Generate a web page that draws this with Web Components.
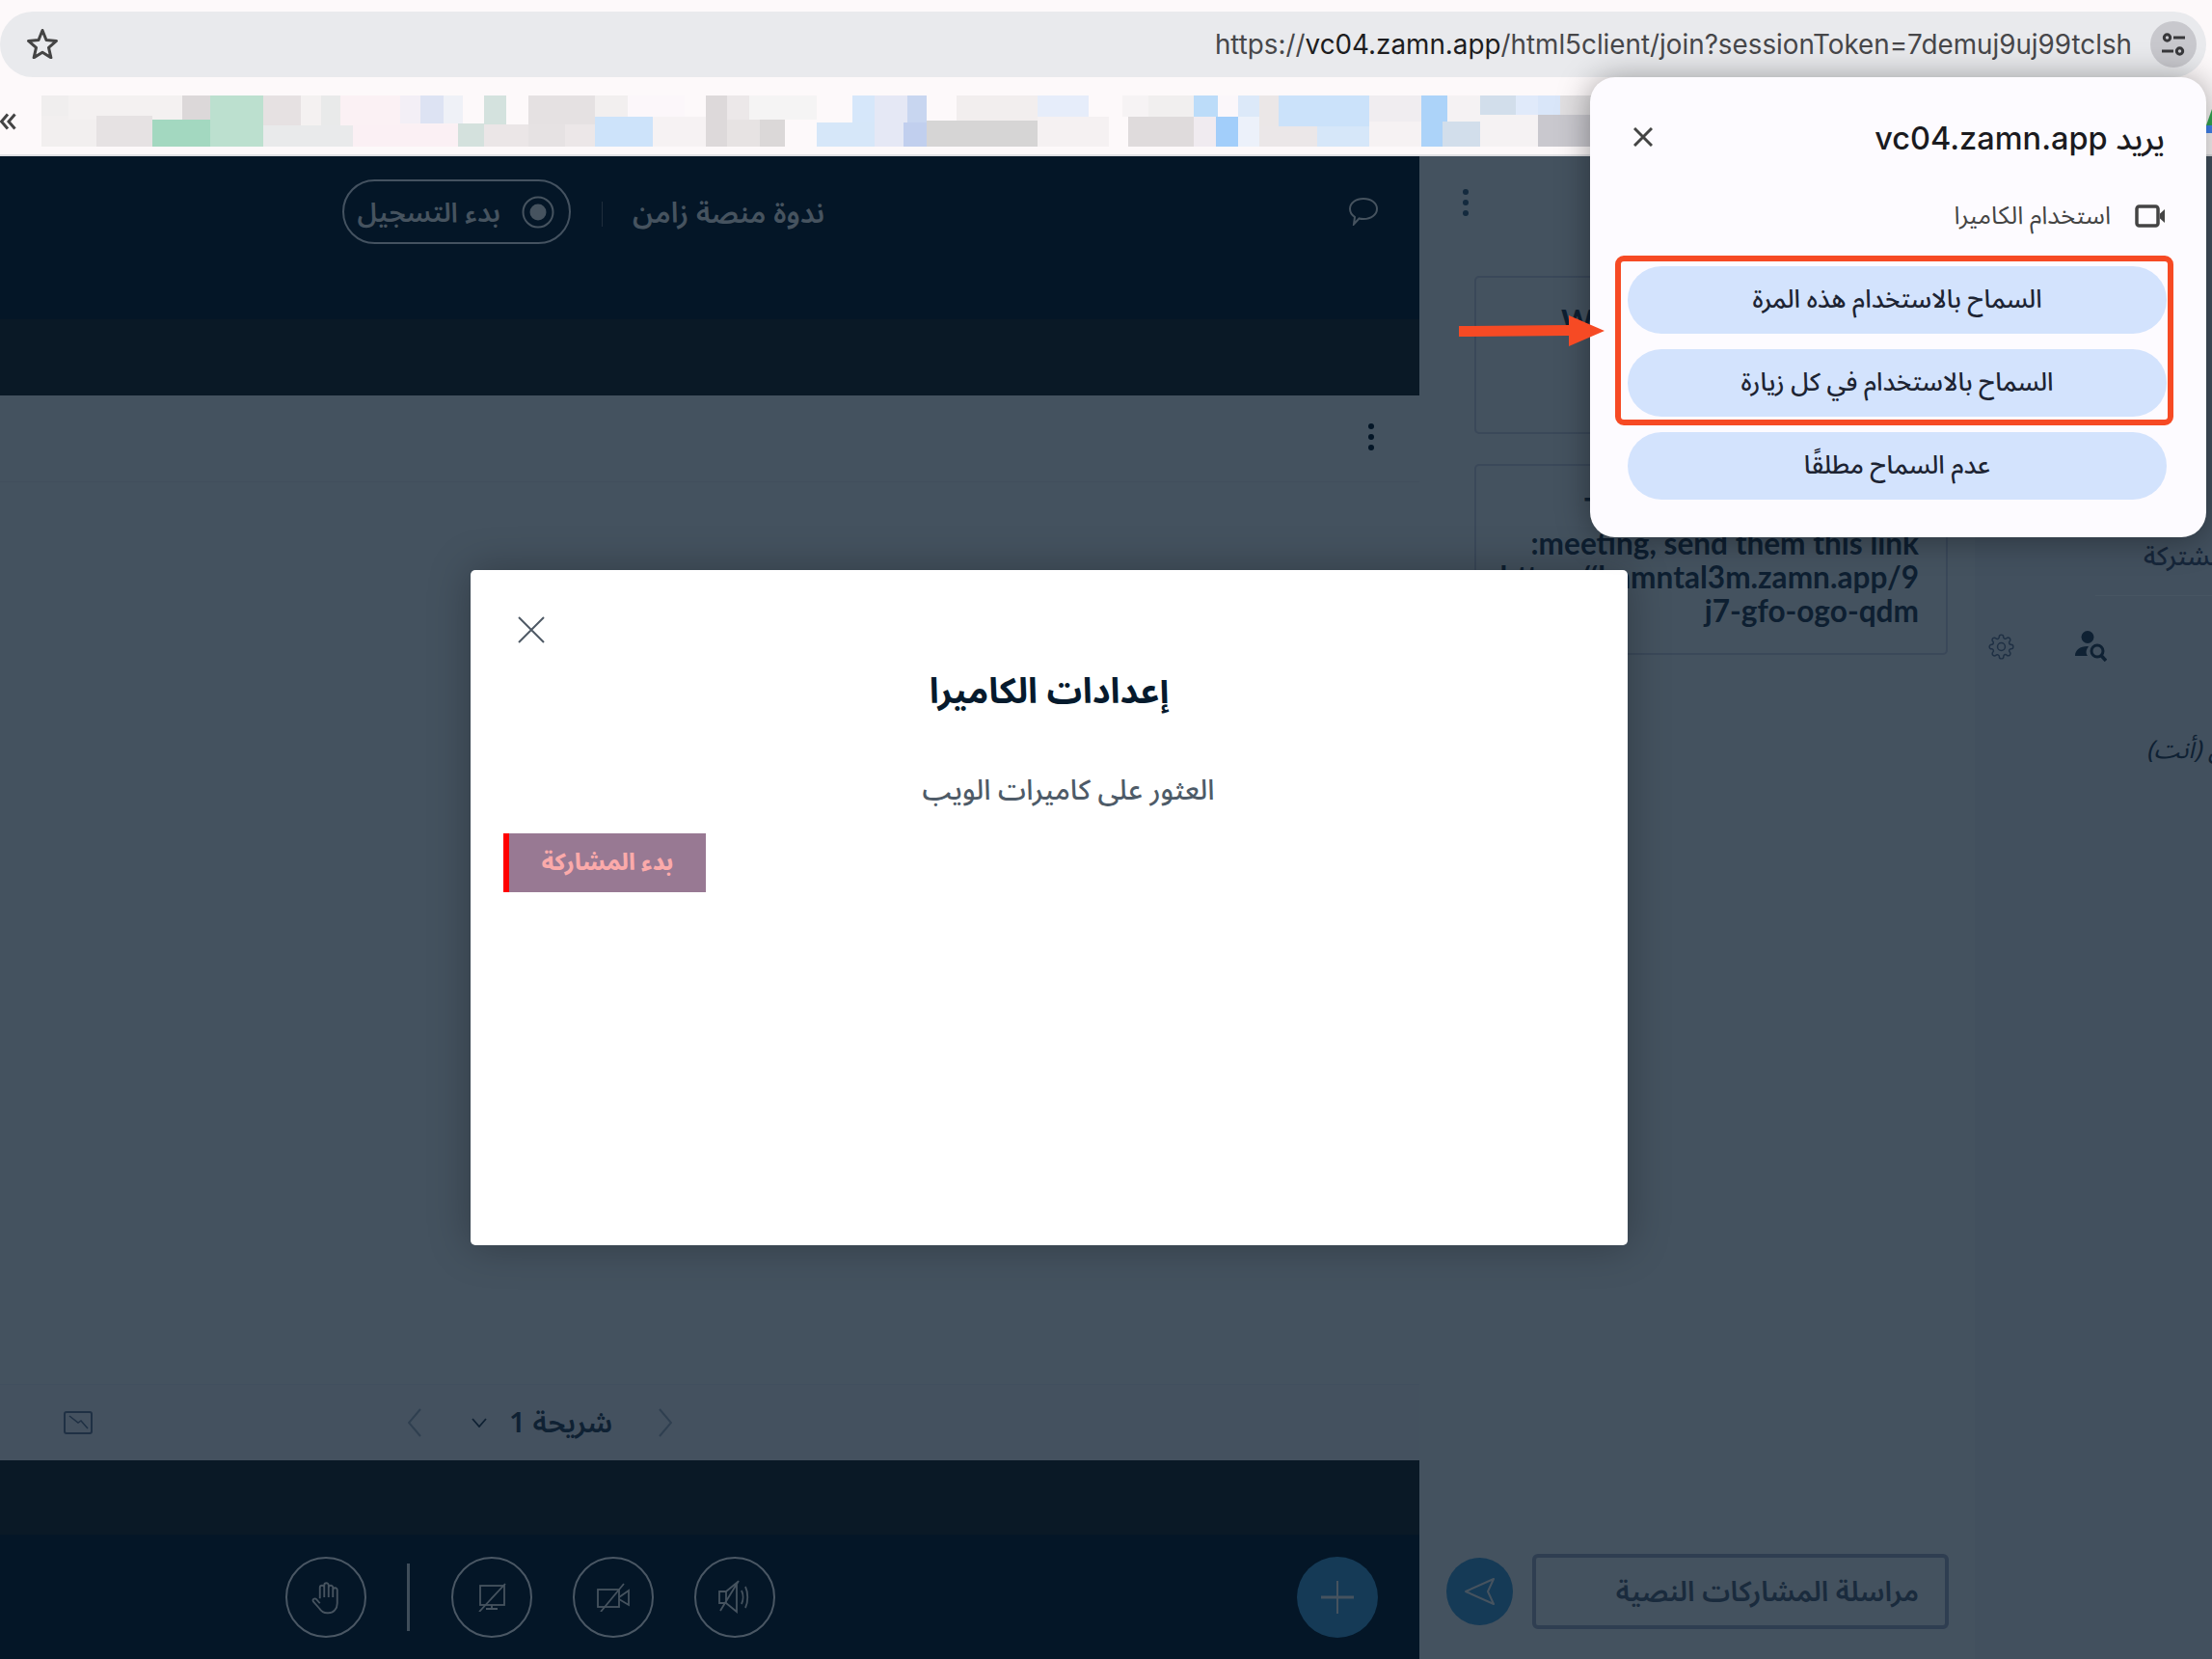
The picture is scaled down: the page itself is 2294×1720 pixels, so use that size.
<!DOCTYPE html>
<html lang="ar"><head><meta charset="utf-8"><title>زامن</title>
<style>
html,body{margin:0;padding:0;width:2294px;height:1720px;overflow:hidden;background:#fdf9fa;font-family:"Noto Sans","DejaVu Sans",sans-serif}
#stage{position:relative;display:flex;flex-direction:column;width:2294px;height:1720px;overflow:hidden}
x-camera-modal{position:absolute;left:488px;top:591px}
x-permission-popup{position:absolute;left:1649px;top:80px}
x-callout{position:absolute;left:0;top:0}
</style></head><body>
<div id="stage">
<x-browser-bar></x-browser-bar>
<x-meeting></x-meeting>
<x-camera-modal></x-camera-modal>
<x-permission-popup></x-permission-popup>
<x-callout></x-callout>
</div>
<script>
const AR='"Noto Sans Arabic","Noto Sans","DejaVu Sans",sans-serif';
function def(name,html,init){customElements.define(name,class extends HTMLElement{constructor(){super();this.attachShadow({mode:'open'}).innerHTML=html;if(init)init(this.shadowRoot,this)}})}

const rects=[
[43,120,57,32,'#f2efef'],[43,99,28,21,'#f0eeee'],[71,99,118,25,'#f4f1f1'],[100,120,58,32,'#e6e2e3'],[158,124,60,28,'#a3d8c0'],[189,99,29,25,'#dcd8d9'],[218,99,55,53,'#bce0cf'],[273,99,39,31,'#e6e1e2'],[312,99,21,31,'#f4f1f1'],[333,99,20,31,'#e9eaea'],[273,130,93,22,'#e9eaeb'],[353,99,62,31,'#fbf1f4'],[366,130,109,22,'#fbf0f4'],[415,99,21,29,'#f3eff6'],[436,99,24,29,'#dde3f3'],[460,99,20,29,'#eff1f7'],[415,128,65,2,'#fbf1f4'],[502,99,23,30,'#d4e2de'],[475,128,27,24,'#d4e1dd'],[502,129,46,23,'#ebe6e7'],
[548,99,69,30,'#e5e1e2'],[548,129,38,23,'#e6e2e3'],[586,129,31,23,'#ece7e8'],[617,99,34,22,'#f2efef'],[651,99,59,22,'#fcf7fa'],[617,121,60,31,'#cde3fa'],[677,121,55,31,'#f6f2f3'],[732,99,22,53,'#ddd9da'],[754,99,23,25,'#ece8e9'],[777,99,70,25,'#f5f4f4'],[754,124,34,28,'#e7e3e3'],[788,124,26,28,'#dbd8d8'],[884,99,23,28,'#d6e7fa'],[847,127,60,25,'#d6e7f9'],[907,99,34,53,'#e5e8f5'],[941,99,20,28,'#c8d6f0'],[937,127,24,25,'#c1cfee'],[992,99,84,26,'#f2eeee'],[961,125,115,27,'#d6d5d5'],
[1076,99,53,22,'#e6edfa'],[1164,99,27,22,'#f6f3f4'],[1191,99,47,22,'#f1efef'],[1076,121,74,31,'#f5f1f2'],[1170,121,68,31,'#dfdbdc'],[1238,99,25,22,'#bcdcf9'],[1263,99,21,22,'#fbf7fa'],[1284,99,22,22,'#dce9f9'],[1238,121,23,31,'#f0ebf0'],[1261,121,23,31,'#a2cefa'],[1284,121,22,31,'#ecf1fa'],[1306,99,20,32,'#ebe7e7'],[1306,131,60,21,'#ebe7e8'],[1326,99,94,32,'#cbe2fa'],[1366,131,54,21,'#d6e7f9'],[1420,99,54,27,'#f0edf0'],[1420,126,54,26,'#f6f2f3'],[1474,99,27,53,'#acd3f9'],[1501,99,34,27,'#f5f2f3'],[1496,126,39,26,'#d2deeb'],[1535,99,37,20,'#d2deeb'],[1572,99,23,20,'#e0eafa'],[1595,99,23,20,'#d9e6f9'],[1618,99,32,20,'#e1dfe1'],[1535,119,60,33,'#f5f2f3'],[1595,119,55,33,'#c9c8ce']];
const strip=rects.map(r=>`<rect x="${r[0]}" y="${r[1]-99}" width="${r[2]}" height="${r[3]}" fill="${r[4]}"/>`).join('');

def('x-browser-bar',`<style>
:host{display:block;height:162px;box-sizing:border-box;background:#fdf9fa;border-bottom:2px solid #dfdfe2;padding-top:12px}
.url{display:flex;align-items:center;height:68px;width:2288px;box-sizing:border-box;background:#e9eaed;border-radius:34px;padding:0 10px 0 27px}
.star{margin-top:-2px}
.u{margin-left:auto;font:400 27.8px Inter,sans-serif;color:#47474a;white-space:nowrap;margin-right:19px}
.u b{font-weight:400;color:#1d1d20}
.chip{width:48px;height:48px;border-radius:50%;background:#c8c8cd;display:flex;align-items:center;justify-content:center}
.marks{display:flex;align-items:flex-start;height:80px}
.dbl{width:43px;height:18px;display:flex;align-items:center;margin-top:37px}
.marks svg.s{display:block;margin-top:19px}
</style>
<div class="url">
<svg class="star" width="34" height="32" viewBox="0 0 34 32"><path d="M17 2.500l4 10 10.500.9-8 7 2.400 10.400-8.900-5.500-8.900 5.500 2.400-10.400-8-7 10.500-.9z" fill="none" stroke="#444" stroke-width="3" stroke-linejoin="round"/></svg>
<span class="u" dir="ltr">https://<b>vc04.zamn.app</b>/html5client/join?sessionToken=7demuj9uj99tclsh</span>
<span class="chip"><svg width="26" height="26" viewBox="0 0 26 26" fill="none" stroke="#38383b" stroke-width="3"><circle cx="6.500" cy="6" r="3.200"/><path d="M13 6h12M1 20h12"/><circle cx="19.500" cy="20" r="3.200"/></svg></span>
</div>
<div class="marks">
<span class="dbl"><svg width="18" height="18" viewBox="0 0 18 18" fill="none" stroke="#444" stroke-width="3"><path d="M8 1.500L1.500 9 8 16.500M15.500 1.500L9 9l6.500 7.500"/></svg></span>
<svg class="s" width="1607" height="53" viewBox="43 0 1607 53">${strip}</svg>
<svg style="display:block;margin-left:638px;margin-top:33px" width="6" height="25" viewBox="0 0 6 25"><path d="M0 17L6 0v17z" fill="#34a853"/><rect y="17" width="6" height="8" fill="#4285f4"/></svg>
</div>`);

def('x-round',`<style>:host{display:flex;align-items:center;justify-content:center;width:84px;height:84px;box-sizing:border-box;border:2px solid #4a5764;border-radius:50%}</style><slot></slot>`);

def('x-stage',`<style>
:host{display:flex;flex-direction:column;width:1472px;background:#44525f;font-family:${AR}}
.top{height:169px;box-sizing:border-box;background:#041627;padding-top:24px;display:flex;align-items:flex-start;color:#46535f}
.pill{margin-left:355px;width:237px;height:67px;box-sizing:border-box;border:2px solid #445260;border-radius:34px;display:flex;align-items:center;justify-content:flex-end;padding-right:15px;gap:22px}
.pill span{font-size:28.200px;line-height:1;white-space:nowrap;font-weight:600;padding-top:3px}
.sep{margin:23px 0 0 32px;width:1px;height:26px;background:#1f2d3c}
.title{margin-left:30px;height:67px;padding-top:3px;box-sizing:border-box;display:flex;align-items:center;font-size:29.700px;font-weight:600;white-space:nowrap;width:201px;justify-content:center}
.bub{margin:18px 42px 0 auto}
.band{height:79px;background:#0a1926}
.body{flex:1;display:flex;flex-direction:column}
.tools{height:90px;box-sizing:border-box;border-bottom:1px solid #414e5c;display:flex;align-items:flex-start;justify-content:flex-end;padding:29px 47px 0 0}
.dots{display:flex;flex-direction:column;gap:5px}.dots i{width:6px;height:6px;border-radius:50%;background:#041627}
.ph{flex:1}
.bar{height:79px;box-sizing:border-box;border-top:1px solid #414f5e;background:#44515f;display:flex;align-items:center;color:#0f2133}
.slide{margin-left:23px;font-size:29.500px;font-weight:600;white-space:nowrap;width:105px;text-align:center}
.band2{height:77px;background:#0a1926}
.acts{height:129px;background:#041627;display:flex;align-items:center;padding-left:296px}
.div{margin:0 43px 0 42px;width:3px;height:70px;background:#3f4d5a}
.plus{margin-left:541px;width:84px;height:84px;border-radius:50%;background:#153a56;display:flex;align-items:center;justify-content:center}
</style>
<div class="top">
<div class="pill"><span>بدء التسجيل</span><svg width="34" height="34" viewBox="0 0 34 34"><circle cx="17" cy="17" r="15.500" fill="none" stroke="#46535f" stroke-width="2"/><circle cx="17" cy="17" r="8.500" fill="#46535f"/></svg></div>
<div class="sep"></div><div class="title">ندوة منصة زامن</div>
<svg class="bub" width="32" height="30" viewBox="0 0 32 30" fill="none" stroke="#46535f" stroke-width="2"><path d="M16 2c8 0 14 4.500 14 10.500S24 23 16 23c-2 0-3 0-4.500-.5L6 28.500l1-7.500C4 19 2 16 2 12.500 2 6.500 8 2 16 2z"/></svg>
</div>
<div class="band"></div>
<div class="body">
<div class="tools"><span class="dots"><i></i><i></i><i></i></span></div>
<div class="ph"></div>
<div class="bar">
<svg style="margin-left:66px" width="30" height="24" viewBox="0 0 30 24" fill="none" stroke="#1f3044"><rect x="1" y="1" width="28" height="22" rx="2" stroke-width="2"/><path d="M6 5l9 7 3-2 7 8" stroke-width="1.500"/></svg>
<svg style="margin-left:327px" width="14" height="30" viewBox="0 0 14 30" fill="none" stroke="#2f3f50" stroke-width="2"><path d="M13 1L1 15l12 14"/></svg>
<svg style="margin-left:52px" width="16" height="10" viewBox="0 0 16 10" fill="none" stroke="#0f2133" stroke-width="1.800"><path d="M1 1l7 8 7-8"/></svg>
<span class="slide">شريحة 1</span>
<svg style="margin-left:50px" width="14" height="30" viewBox="0 0 14 30" fill="none" stroke="#2f3f50" stroke-width="2"><path d="M1 1l12 14L1 29"/></svg>
</div>
</div>
<div class="band2"></div>
<div class="acts">
<x-round><svg width="30" height="36" viewBox="0 0 24 28" fill="none" stroke="#46535f" stroke-width="1.500" stroke-linejoin="round"><path d="M7 15V6a1.800 1.800 0 0 1 3.600 0V4a1.800 1.800 0 0 1 3.600 0v2a1.800 1.800 0 0 1 3.600 0v2a1.800 1.800 0 0 1 3.600 0v11c0 4.500-3 8-7.500 8h-1c-3 0-4.800-1.400-6.200-3.600L1.500 17.500c-1-1.800 1.200-3.200 2.600-1.800L7 19M10.600 6v8M14.200 6v8M17.800 8v6"/></svg></x-round>
<span class="div"></span>
<x-round><svg width="30" height="30" viewBox="0 0 30 30" fill="none" stroke="#46535f" stroke-width="1.800"><rect x="3" y="3" width="25" height="20"/><path d="M15 23v4M9 27h12M2 30L29 1"/></svg></x-round>
<x-round style="margin-left:42px"><svg width="34" height="30" viewBox="0 0 34 30" fill="none" stroke="#46535f" stroke-width="1.800"><rect x="1" y="7" width="22" height="18"/><path d="M23 15l10-7v15l-10-6M4 30L28 1"/></svg></x-round>
<x-round style="margin-left:42px"><svg width="36" height="36" viewBox="0 0 36 36" fill="none" stroke="#46535f" stroke-width="1.800"><path d="M2 12h7v12H2zM9 12L20 3v30L9 24M3 32L22 1M25 11c2 4 2 10 0 14M29 7c3 6 3 16 0 22"/></svg></x-round>
<span class="plus"><svg width="34" height="34" viewBox="0 0 34 34"><path d="M0 17h34" stroke="#46535f" stroke-width="3"/><path d="M17 0v34" stroke="#46535f" stroke-width="2"/></svg></span>
</div>`);

def('x-chat',`<style>
:host{display:flex;flex-direction:column;width:576px;background:#44525f;box-sizing:border-box}
.dots{height:124px;box-sizing:border-box;padding:34px 0 0 45px;display:flex;flex-direction:column;gap:5px}.dots i{width:6px;height:6px;border-radius:50%;background:#142a3e}
.card{margin-left:57px;width:491px;box-sizing:border-box;border:2px solid #3a4859;border-radius:5px;overflow:hidden;color:#0e1f31;font:700 31.600px/35px Lato,sans-serif}
.c1{height:164px;padding:28px 0 0 88px;white-space:nowrap}
.c2{height:198px;margin-top:31px;padding:28px 28px 0 0;text-align:right;white-space:nowrap}
.foot{margin-top:auto;display:flex;align-items:center;padding:0 0 31px 28px;gap:20px}
.send{width:69px;height:70px;border-radius:50%;background:#153a56;display:flex;align-items:center;justify-content:center}
.inp{width:432px;height:78px;box-sizing:border-box;border:4px solid #2f3e51;border-radius:6px;display:flex;align-items:center;justify-content:flex-end;padding-right:27px;font:600 29px ${AR};color:#1a2b3d;white-space:nowrap}
</style>
<div class="dots"><i></i><i></i><i></i></div>
<div class="card c1">Welcome</div>
<div class="card c2" dir="rtl">To invite someone to the<br>meeting, send them this link:<br>https://hamntal3m.zamn.app/9<br>j7-gfo-ogo-qdm</div>
<div class="foot"><span class="send"><svg width="32" height="28" viewBox="0 0 32 28" fill="none" stroke="#46535f" stroke-width="2" stroke-linejoin="round"><path d="M1 14L30 1l-6 13 6 13z"/></svg></span><div class="inp">مراسلة المشاركات النصية</div></div>`);

def('x-users',`<style>
:host{display:block;width:246px;background:#42505e;overflow:hidden;color:#0f2133;font-family:${AR};box-sizing:border-box}
.t{margin:396px 0 0 175px;font-size:27px;line-height:40px;white-space:nowrap;color:#16263a;font-weight:500}
.l{height:1px;background:#475562;margin:19px 0 0 125px}
.ic{display:flex;align-items:center;margin:36px 0 0 14px;height:32px}
.n{margin:72px 0 0 178px;font-size:26px;line-height:40px;font-style:italic;white-space:nowrap}
.n span{display:inline-block}
</style>
<div class="t"><span dir="rtl">الملاحظات المشتركة</span></div>
<div class="l"></div>
<div class="ic">
<svg width="27" height="27" viewBox="0 0 24 24" fill="none" stroke="#1f3044" stroke-width="1.300"><circle cx="12" cy="12" r="3.500"/><path d="M19.400 15a1.650 1.650 0 0 0 .33 1.820l.06.06a2 2 0 0 1 0 2.830 2 2 0 0 1-2.830 0l-.06-.06a1.650 1.650 0 0 0-1.820-.33 1.650 1.650 0 0 0-1 1.510V21a2 2 0 0 1-2 2 2 2 0 0 1-2-2v-.09A1.650 1.650 0 0 0 9 19.400a1.650 1.650 0 0 0-1.820.33l-.06.06a2 2 0 0 1-2.830 0 2 2 0 0 1 0-2.830l.06-.06a1.650 1.650 0 0 0 .33-1.820 1.650 1.650 0 0 0-1.510-1H3a2 2 0 0 1-2-2 2 2 0 0 1 2-2h.09A1.650 1.650 0 0 0 4.600 9a1.650 1.650 0 0 0-.33-1.820l-.06-.06a2 2 0 0 1 0-2.830 2 2 0 0 1 2.830 0l.06.06a1.650 1.650 0 0 0 1.820.33H9a1.650 1.650 0 0 0 1-1.510V3a2 2 0 0 1 2-2 2 2 0 0 1 2 2v.09a1.650 1.650 0 0 0 1 1.510 1.650 1.650 0 0 0 1.820-.33l.06-.06a2 2 0 0 1 2.830 0 2 2 0 0 1 0 2.830l-.06.06a1.650 1.650 0 0 0-.33 1.820V9a1.650 1.650 0 0 0 1.510 1H21a2 2 0 0 1 2 2 2 2 0 0 1-2 2h-.09a1.650 1.650 0 0 0-1.510 1z"/></svg>
<svg style="margin-left:63px" width="33" height="32" viewBox="0 0 33 32"><circle cx="13" cy="6.500" r="6.500" fill="#0f2133"/><path d="M0 26c0-6 5-10 13-10l1 .5c-3 3-3 7-1 9.500z" fill="#0f2133"/><circle cx="23" cy="21" r="6" fill="none" stroke="#0f2133" stroke-width="3"/><path d="M27 25.500L32 31" stroke="#0f2133" stroke-width="3.500"/></svg>
</div>
<div class="n"><span dir="rtl">زامن (أنت)</span></div>`);

def('x-meeting',`<style>:host{display:flex;flex:1;min-height:0}x-stage,x-chat,x-users{height:1558px}</style><x-stage></x-stage><x-chat></x-chat><x-users></x-users>`);

def('x-camera-modal',`<style>
:host{display:block;width:1200px;height:700px;background:#fff;border-radius:5px;box-shadow:0 0 44px rgba(0,0,0,.28);font-family:${AR};overflow:hidden}
.x{display:block;margin:48px 0 0 49px}
h2{margin:26px 0 0;text-align:center;font-size:36.400px;line-height:50px;font-weight:700;color:#061a2d}
p{margin:57px 0 0 40px;text-align:center;font-size:29.200px;line-height:40px;color:#4e5b68;font-weight:500}
.b{margin:24px 0 0 34px;width:210px;height:61px;box-sizing:border-box;background:#987993;border-left:6px solid #f00;color:#fbaaaa;font-weight:800;font-size:23.800px;display:flex;align-items:center;justify-content:center}
</style>
<svg class="x" width="28" height="28" viewBox="0 0 28 28" stroke="#4e5965" stroke-width="2"><path d="M1 1l26 26M27 1L1 27"/></svg>
<h2>إعدادات الكاميرا</h2><p>العثور على كاميرات الويب</p><div class="b">بدء المشاركة</div>`);

def('x-perm-btn',`<style>:host{display:flex;align-items:center;justify-content:center;height:70px;box-sizing:border-box;padding-bottom:2px;border-radius:35px;background:#d3e3fd;color:#1d2433;font-size:26px;font-weight:500;white-space:nowrap}</style><slot></slot>`);

def('x-permission-popup',`<style>
:host{display:flex;flex-direction:column;width:639px;height:477px;box-sizing:border-box;background:#fdfbff;border-radius:26px;box-shadow:0 2px 34px rgba(0,0,0,.38);padding:0 41px 0 39px;font-family:${AR}}
.h{display:flex;align-items:center;justify-content:space-between;height:60px;margin-top:35px;padding:0 2px 0 6px}
.h svg{margin-top:-6px}
.h span{font:500 32.500px Inter,${AR};color:#1b1b1f;white-space:nowrap;margin-top:-1px}
.r{display:flex;align-items:center;justify-content:flex-end;gap:25px;height:40px;margin-top:29px;font-size:25.600px;color:#444;padding-right:2px;white-space:nowrap}
.bs{display:flex;flex-direction:column;gap:16px;margin-top:32px}
</style>
<div class="h"><svg width="20" height="20" viewBox="0 0 20 20" stroke="#444" stroke-width="3"><path d="M1 1l18 18M19 1L1 19"/></svg><span dir="rtl">يريد vc04.zamn.app</span></div>
<div class="r"><span>استخدام الكاميرا</span><svg width="31" height="24" viewBox="0 0 31 24"><rect x="2" y="2" width="22" height="20" rx="2.500" fill="none" stroke="#444" stroke-width="3.500"/><path d="M26 9.500l5-4.500v14l-5-4.500z" fill="#444"/></svg></div>
<div class="bs"><x-perm-btn>السماح بالاستخدام هذه المرة</x-perm-btn><x-perm-btn>السماح بالاستخدام في كل زيارة</x-perm-btn><x-perm-btn>عدم السماح مطلقًا</x-perm-btn></div>`);

def('x-callout',`<style>
:host{display:block;width:0;height:0}
.box{position:absolute;left:1675px;top:265px;width:579px;height:176px;box-sizing:border-box;border:6px solid #f64a24;border-radius:9px}
svg{position:absolute;left:1513px;top:326px}
</style><div class="box"></div><svg width="152" height="34" viewBox="0 0 152 34"><path d="M0 12l114-1V1l37 16-37 16V22L0 23z" fill="#f64a24"/></svg>`);
</script>
</body></html>
